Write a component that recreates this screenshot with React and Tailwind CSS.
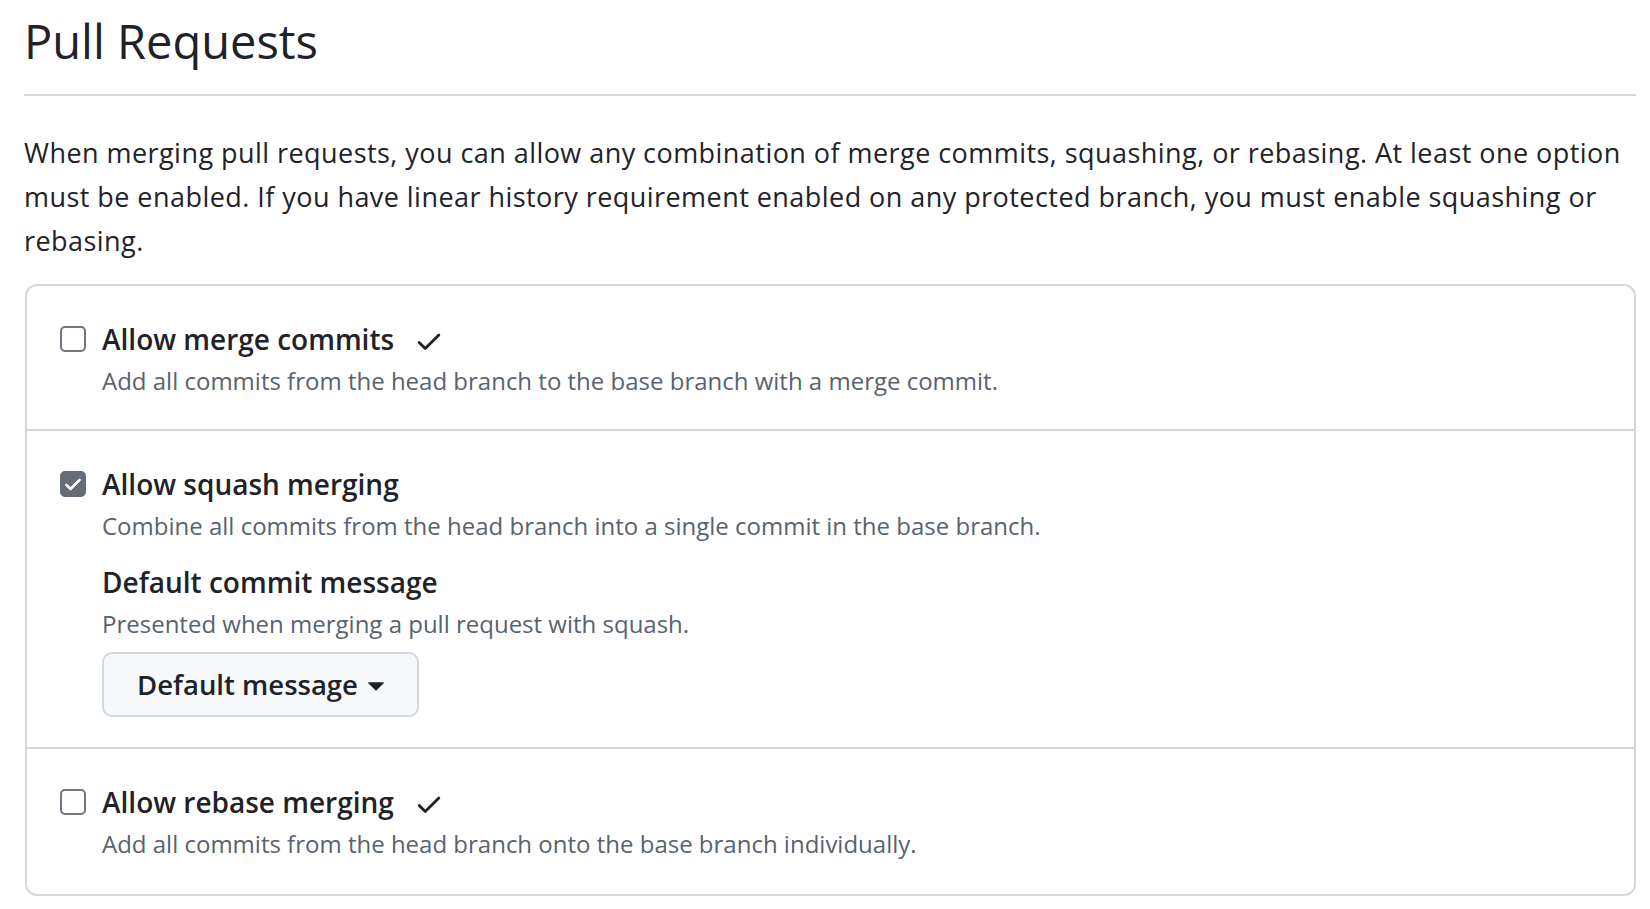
import React, { useState } from "react";

const font = { fontFamily: '"Open Sans", "Noto Sans", sans-serif' };

function CheckIcon({ className = "" }) {
  return (
    <svg viewBox="0 0 16 16" className={className} fill="currentColor" aria-hidden>
      <path d="M13.78 4.22a.75.75 0 0 1 0 1.06l-7.25 7.25a.75.75 0 0 1-1.06 0L2.22 9.28a.751.751 0 0 1 .018-1.042.751.751 0 0 1 1.042-.018L6 10.94l6.72-6.72a.75.75 0 0 1 1.06 0Z" />
    </svg>
  );
}

function Checkbox({ checked, onChange }) {
  return (
    <button
      type="button"
      onClick={onChange}
      className={`w-[26px] h-[26px] shrink-0 rounded-[5px] flex items-center justify-center ${
        checked ? "bg-[#656d76] border-2 border-[#656d76]" : "bg-white border-2 border-[#6e7781]"
      }`}
      aria-pressed={checked}
    >
      {checked && (
        <svg viewBox="0 0 16 16" className="w-[20px] h-[20px] text-white" fill="currentColor">
          <path d="M13.78 4.22a.75.75 0 0 1 0 1.06l-7.25 7.25a.75.75 0 0 1-1.06 0L2.22 9.28a.751.751 0 0 1 .018-1.042.751.751 0 0 1 1.042-.018L6 10.94l6.72-6.72a.75.75 0 0 1 1.06 0Z" stroke="currentColor" strokeWidth="0.8" />
        </svg>
      )}
    </button>
  );
}

function OptionRow({ title, description, checked, onToggle, showCheck, children, last }) {
  return (
    <div className={`px-[33px] pt-[33px] ${last ? "pb-[32px]" : "pb-[30px] border-b-2 border-[#d1d9e0]"}`}>
      <div className="flex items-center h-[40px]">
        <Checkbox checked={checked} onChange={onToggle} />
        <span className="ml-[16px] text-[28px] leading-[40px] font-semibold text-[#1f2328]">{title}</span>
        {showCheck && <CheckIcon className="ml-[20px] w-[30px] h-[30px] mt-[4px] text-[#1f2328]" />}
      </div>
      <div className="pl-[42px]">
        <p className="mt-[4px] text-[24px] leading-[36px] text-[#59636e]">{description}</p>
        {children}
      </div>
    </div>
  );
}

export default function App() {
  const [merge, setMerge] = useState(false);
  const [squash, setSquash] = useState(true);
  const [rebase, setRebase] = useState(false);

  return (
    <div className="min-h-screen bg-white pl-[24px] pr-[14px] pt-[11px]" style={font}>
      <h1 className="text-[47px] leading-[60px] font-normal text-[#1f2328] pb-[23px] border-b-2 border-[#d1d9e0]">
        Pull Requests
      </h1>
      <p className="mt-[35px] text-[27px] leading-[44px] tracking-[0.45px] text-[#1f2328]">
        When merging pull requests, you can allow any combination of merge commits, squashing, or rebasing. At least one option must be enabled. If you have linear history requirement enabled on any protected branch, you must enable squashing or rebasing.
      </p>

      <section className="mt-[21px] ml-px border-2 border-[#d1d9e0] rounded-[12px]">
        <OptionRow
          title="Allow merge commits"
          description="Add all commits from the head branch to the base branch with a merge commit."
          checked={merge}
          onToggle={() => setMerge((v) => !v)}
          showCheck
        />
        <OptionRow
          title="Allow squash merging"
          description="Combine all commits from the head branch into a single commit in the base branch."
          checked={squash}
          onToggle={() => setSquash((v) => !v)}
        >
          <h3 className="mt-[18px] text-[28px] leading-[40px] font-semibold text-[#1f2328]">Default commit message</h3>
          <p className="mt-[4px] text-[24px] leading-[36px] text-[#59636e]">
            Presented when merging a pull request with squash.
          </p>
          <button
            type="button"
            className="mt-[10px] h-[65px] px-[33px] flex items-center gap-[10px] bg-[#f6f8fa] border-2 border-[#d1d9e0] rounded-[10px] text-[27.5px] font-semibold text-[#1f2328]"
          >
            Default message
            <svg viewBox="0 0 16 9" className="w-[16px] h-[9px] mt-[3px]" fill="currentColor" aria-hidden>
              <path d="M0.6 0.3 H15.4 a0.5 0.5 0 0 1 0.35 0.85 L8.35 8.4 a0.5 0.5 0 0 1 -0.7 0 L0.25 1.15 A0.5 0.5 0 0 1 0.6 0.3 Z" />
            </svg>
          </button>
        </OptionRow>
        <OptionRow
          title="Allow rebase merging"
          description="Add all commits from the head branch onto the base branch individually."
          checked={rebase}
          onToggle={() => setRebase((v) => !v)}
          showCheck
          last
        />
      </section>
    </div>
  );
}
